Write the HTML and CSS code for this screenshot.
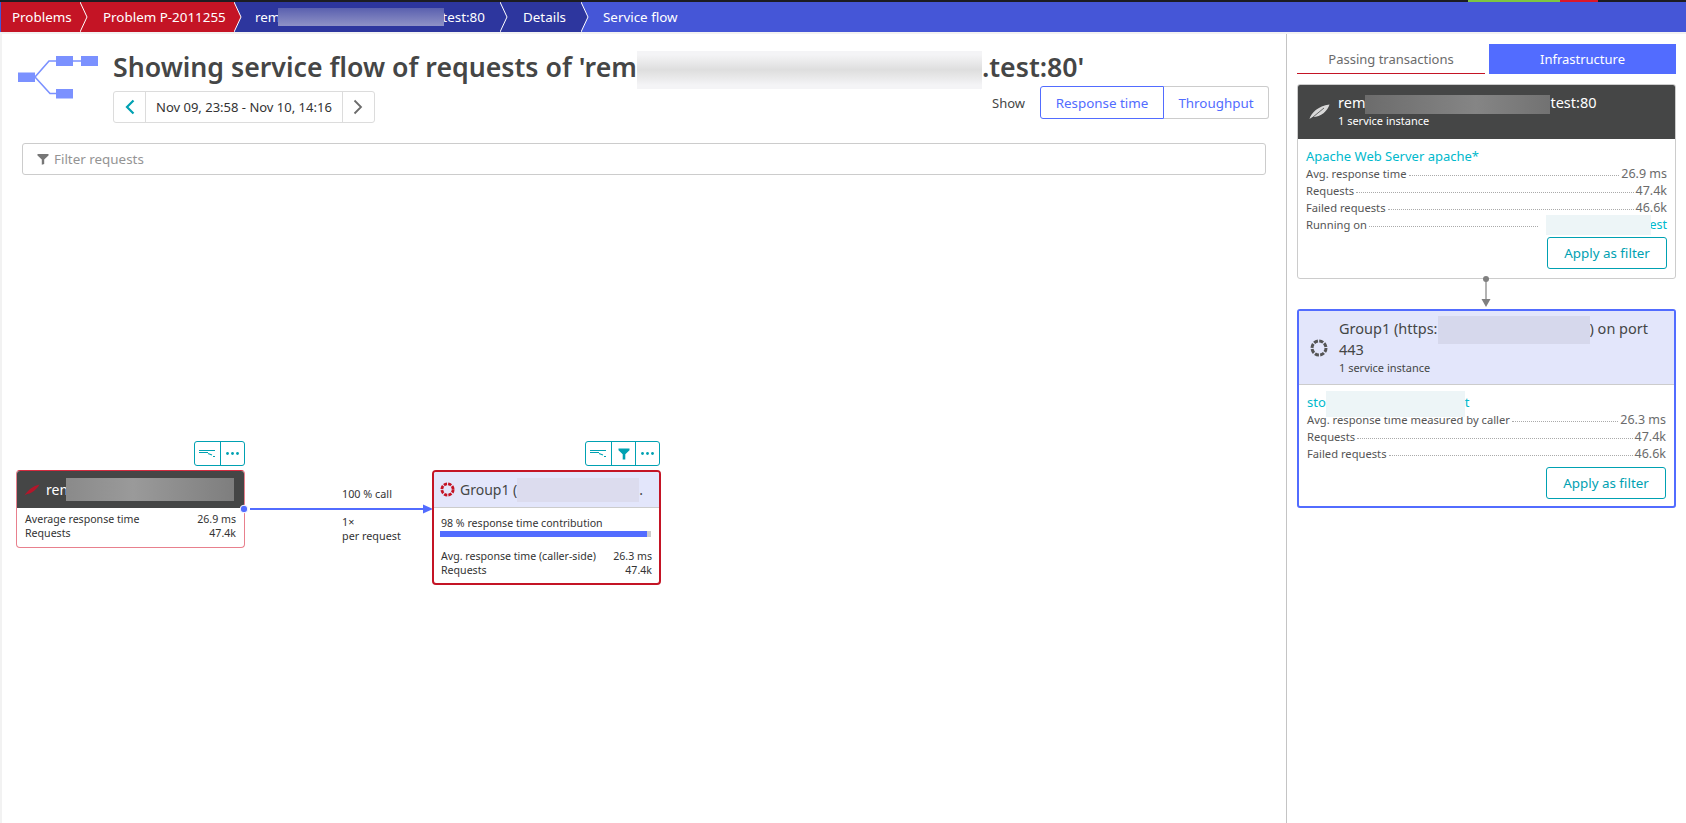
FILE: index.html
```html
<!DOCTYPE html>
<html lang="en">
<head>
<meta charset="utf-8">
<title>Service flow</title>
<link rel="stylesheet" href="styles.css">
</head>
<body>
<div class="app">
  <div class="statusbar"><span class="status-green"></span><span class="status-red"></span></div>
  <nav class="crumbs">
    <a class="crumb crumb-red c1">Problems<svg class="chev" viewBox="0 0 8 30"><path d="M0 0L7 15L0 30Z" fill="#c41425"/><path d="M0 0L7 15L0 30" fill="none" stroke="#fff"/></svg></a>
    <a class="crumb crumb-red c2">Problem P-2011255<svg class="chev" viewBox="0 0 8 30"><path d="M0 0L7 15L0 30Z" fill="#c41425"/><path d="M0 0L7 15L0 30" fill="none" stroke="#fff"/></svg></a>
    <a class="crumb crumb-navy c3">rem<span class="redact r-crumb"></span>test:80<svg class="chev" viewBox="0 0 8 30"><path d="M0 0L7 15L0 30Z" fill="#2d369e"/><path d="M0 0L7 15L0 30" fill="none" stroke="#fff"/></svg></a>
    <a class="crumb crumb-navy c4">Details<svg class="chev" viewBox="0 0 8 30"><path d="M0 0L7 15L0 30Z" fill="#2d369e"/><path d="M0 0L7 15L0 30" fill="none" stroke="#fff"/></svg></a>
    <a class="crumb crumb-blue">Service flow</a>
  </nav>
  <div class="main">
    <section class="left">
      <header class="head">
        <svg class="flow-icon" width="84" height="44" viewBox="0 0 84 44">
          <path d="M17 22L31 6H65M17 22L32 38.5H40" fill="none" stroke="#7b91ff" stroke-width="1.6"/>
          <rect x="0" y="17.5" width="17" height="9.5" fill="#7b91ff"/>
          <rect x="38" y="1" width="17" height="10" fill="#7b91ff"/>
          <rect x="63" y="1" width="17" height="10" fill="#7b91ff"/>
          <rect x="38" y="34" width="17" height="9.5" fill="#7b91ff"/>
        </svg>
        <div class="head-main">
          <h1 class="title">Showing service flow of requests of 'rem<span class="redact r-title"></span>.test:80'</h1>
          <div class="controls">
            <div class="datenav">
              <span class="nav-btn"><svg width="10" height="16" viewBox="0 0 10 16"><path d="M8.5 1.5L2 8L8.5 14.5" fill="none" stroke="#00a1b2" stroke-width="2.2"/></svg></span>
              <span class="date">Nov 09, 23:58 - Nov 10, 14:16</span>
              <span class="nav-btn nav-next"><svg width="10" height="16" viewBox="0 0 10 16"><path d="M1.5 1.5L8 8L1.5 14.5" fill="none" stroke="#6b6b6b" stroke-width="1.8"/></svg></span>
            </div>
            <div class="show">
              <span class="show-label">Show</span>
              <span class="seg seg-on">Response time</span>
              <span class="seg seg-off">Throughput</span>
            </div>
          </div>
        </div>
      </header>
      <div class="filter">
        <svg width="12" height="12" viewBox="0 0 12 12"><path d="M0.5 1H11.5V2.4L7.2 6.5V11L4.8 11.8V6.5L0.5 2.4Z" fill="#777"/></svg>
        <span>Filter requests</span>
      </div>
      <div class="canvas">
        <div class="toolbar tb1">
          <span class="tool tool-flow"><svg width="17" height="10" viewBox="0 0 17 10"><path d="M0 1.5H16M0 3.5H9M9 4.5L13 6M14 7.5H16" fill="none" stroke="#00a1b2" stroke-width="1.2"/></svg></span>
          <span class="tool tool-more"><svg width="13" height="3" viewBox="0 0 13 3"><circle cx="1.5" cy="1.5" r="1.4" fill="#00a1b2"/><circle cx="6.5" cy="1.5" r="1.4" fill="#00a1b2"/><circle cx="11.5" cy="1.5" r="1.4" fill="#00a1b2"/></svg></span>
        </div>
        <div class="node node1">
          <div class="node-head dark">
            <svg class="n-leaf" width="16" height="12" viewBox="0 0 16 12"><path d="M0.5 11.5C4 6 9 2 15.5 0.5C13 5 8 9.5 3 10Z" fill="#b4162a"/></svg>
            <span>ren</span><span class="redact r-node1"></span>
          </div>
          <div class="node-body">
            <div class="kv"><span>Average response time</span><span>26.9 ms</span></div>
            <div class="kv"><span>Requests</span><span>47.4k</span></div>
          </div>
        </div>
        <svg class="edge" width="200" height="14" viewBox="0 0 200 14">
          <circle cx="5" cy="7" r="3.8" fill="#526cff" stroke="#fff" stroke-width="1"/>
          <path d="M11 7H188" stroke="#526cff" stroke-width="1.8"/>
          <path d="M184 2.5L194 7L184 11.5Z" fill="#526cff"/>
        </svg>
        <div class="edge-label l1">100 % call</div>
        <div class="edge-label l2">1×<br>per request</div>
        <div class="toolbar tb2">
          <span class="tool tool-flow"><svg width="17" height="10" viewBox="0 0 17 10"><path d="M0 1.5H16M0 3.5H9M9 4.5L13 6M14 7.5H16" fill="none" stroke="#00a1b2" stroke-width="1.2"/></svg></span>
          <span class="tool tool-filter"><svg width="12" height="12" viewBox="0 0 12 12"><path d="M0.5 0.5H11.5V2.2L7.3 6.3V11.5H4.7V6.3L0.5 2.2Z" fill="#00a1b2"/></svg></span>
          <span class="tool tool-more"><svg width="13" height="3" viewBox="0 0 13 3"><circle cx="1.5" cy="1.5" r="1.4" fill="#00a1b2"/><circle cx="6.5" cy="1.5" r="1.4" fill="#00a1b2"/><circle cx="11.5" cy="1.5" r="1.4" fill="#00a1b2"/></svg></span>
        </div>
        <div class="node node2">
          <div class="node-head light">
            <svg class="n-ring" width="15" height="15" viewBox="0 0 16 16"><circle cx="8" cy="8" r="6" fill="none" stroke="#c41425" stroke-width="3" stroke-dasharray="3.5 1.21"/></svg>
            <span>Group1 (</span><span class="redact r-node2"></span><span>.</span>
          </div>
          <div class="node-body">
            <div class="contrib">98 % response time contribution</div>
            <div class="bar"><div class="bar-fill"></div></div>
            <div class="kv"><span>Avg. response time (caller-side)</span><span>26.3 ms</span></div>
            <div class="kv"><span>Requests</span><span>47.4k</span></div>
          </div>
        </div>
      </div>
    </section>
    <aside class="right">
      <div class="tabs">
        <span class="tab tab-off">Passing transactions</span>
        <span class="tab tab-on">Infrastructure</span>
      </div>
      <article class="card card-a">
        <div class="card-head dark">
          <svg class="leaf" width="21" height="16" viewBox="0 0 21 16"><path d="M0.5 15C2 9 9 2 20.5 0.5C18.5 7 12 13 4 13Z" fill="#d8d8d8"/><path d="M1 15.5L15 4" stroke="#454646" stroke-width="0.8"/></svg>
          <div>
            <div class="card-title">rem<span class="redact r-card"></span>test:80</div>
            <div class="card-sub">1 service instance</div>
          </div>
        </div>
        <div class="card-body">
          <div class="link-title">Apache Web Server apache*</div>
          <div class="row"><span>Avg. response time</span><i></i><span class="val">26.9 ms</span></div>
          <div class="row"><span>Requests</span><i></i><span class="val">47.4k</span></div>
          <div class="row"><span>Failed requests</span><i></i><span class="val">46.6k</span></div>
          <div class="row row-run"><span>Running on</span><i></i><span class="redact r-run"></span><span class="val-link">test</span></div>
          <div class="actions"><span class="apply">Apply as filter</span></div>
        </div>
      </article>
      <svg class="connector" width="12" height="32" viewBox="0 0 12 32">
        <circle cx="6" cy="3" r="3" fill="#808080"/>
        <path d="M6 3V24" stroke="#808080" stroke-width="1.2"/>
        <path d="M1.5 23H10.5L6 31Z" fill="#808080"/>
      </svg>
      <article class="card card-b">
        <div class="card-head light">
          <svg class="ring" width="18" height="18" viewBox="0 0 18 18"><circle cx="9" cy="9" r="7" fill="none" stroke="#555" stroke-width="3" stroke-dasharray="4.2 1.3"/></svg>
          <div class="card-text">
            <div class="card-title">Group1 (https:<span class="redact r-card2"></span>) on port 443</div>
            <div class="card-sub">1 service instance</div>
          </div>
        </div>
        <div class="card-body">
          <div class="link-title">sto<span class="redact r-link"></span>t</div>
          <div class="row"><span>Avg. response time measured by caller</span><i></i><span class="val">26.3 ms</span></div>
          <div class="row"><span>Requests</span><i></i><span class="val">47.4k</span></div>
          <div class="row"><span>Failed requests</span><i></i><span class="val">46.6k</span></div>
          <div class="actions"><span class="apply">Apply as filter</span></div>
        </div>
      </article>
    </aside>
  </div>
</div>
</body>
</html>
```
FILE: styles.css
```css
* { box-sizing: border-box; }
html, body { margin: 0; height: 100%; background: #fff; overflow: hidden; }
body { font-family: "Noto Sans", "Open Sans", sans-serif; color: #454646; }
.app { display: flex; flex-direction: column; height: 823px; }

.statusbar { height: 2px; background: #1c1c22; display: flex; padding-left: 1468px; flex: none; }
.status-green { width: 92px; background: #7dc540; }
.status-red { width: 38px; background: #dc172a; }

.crumbs { display: flex; height: 30px; flex: none; background: #4556d7; padding-left: 1px; }
.crumb { position: relative; display: flex; align-items: center; height: 30px; color: #fff; font-size: 13.4px; white-space: nowrap; flex: none; }
.crumb-red { background: #c41425; }
.crumb-navy { background: #2d369e; }
.crumb-blue { background: #4556d7; padding-left: 22px; flex: 1; }
.c1 { width: 79px; padding-left: 11px; }
.c2 { width: 154px; padding-left: 23px; }
.c3 { width: 266px; padding-left: 21px; }
.c4 { width: 81px; padding-left: 23px; }
.chev { position: absolute; left: 100%; top: 0; width: 8px; height: 30px; z-index: 2; }

.redact { display: inline-block; flex: none; vertical-align: middle; filter: blur(0.6px); position: relative; }
.r-crumb { width: 166px; height: 18px; margin: -4px -2px -4px -2px; background: linear-gradient(#5a60af, #8f92c6); }
.r-title { width: 345px; height: 38px; margin: -8px 0; background: linear-gradient(#f4f4f6 10%, #dedede 50%, #f4f4f6 90%); }
.r-card { width: 185px; height: 19px; margin: -4px 0; background: linear-gradient(90deg, #6c6c6c, #858585 60%, #727272); }
.r-node1 { width: 168px; height: 23px; background: linear-gradient(90deg, #8a8a8a, #9a9a9a 40%, #7e7e7e); }
.r-node2 { width: 122px; height: 24px; background: #dcdcee; }
.r-card2 { width: 152px; height: 28px; margin: -8px 0; background: #d6d8ec; }
.r-run { width: 105px; height: 20px; margin: -6px -6px -6px 6px; background: #edf5f7; align-self: center; }
.r-link { width: 139px; height: 26px; margin: -8px 0; background: #edf5f7; }

.main { flex: 1; display: flex; min-height: 0; border-top: 2px solid #f2f2f2; border-left: 2px solid #f2f2f2; }
.left { flex: 1; display: flex; flex-direction: column; min-width: 0; }
.right { width: 400px; flex: none; border-left: 1px solid #c4c4c4; padding: 10px 9px 0 10px; }

.head { display: flex; padding: 0 17px 0 16px; }
.flow-icon { flex: none; margin-top: 21px; }
.head-main { flex: 1; margin-left: 11px; min-width: 0; }
.title { margin: 14px 0 0; font-size: 26.7px; font-weight: 600; line-height: 38px; white-space: nowrap; color: #454646; }
.controls { display: flex; justify-content: space-between; align-items: flex-start; }
.datenav { display: flex; height: 32px; margin-top: 5px; border: 1px solid #dcdcdc; border-radius: 3px; align-items: center; }
.nav-btn { width: 31px; height: 100%; display: flex; align-items: center; justify-content: center; }
.nav-next { width: 32px; border-left: 1px solid #dcdcdc; }
.date { height: 100%; display: flex; align-items: center; padding: 0 10px; border-left: 1px solid #dcdcdc; font-size: 13px; color: #333; }
.show { display: flex; align-items: center; height: 33px; }
.show-label { font-size: 13px; margin-right: 15px; }
.seg { height: 33px; display: flex; align-items: center; justify-content: center; font-size: 13.4px; color: #526cff; }
.seg-on { width: 124px; border: 1px solid #526cff; border-radius: 3px 0 0 3px; }
.seg-off { width: 105px; border: 1px solid #ccc; border-left: 0; border-radius: 0 3px 3px 0; }

.filter { display: flex; align-items: center; gap: 5px; height: 32px; margin: 20px 20px 0 20px; padding-left: 14px; padding-bottom: 1px; border: 1px solid #ccc; border-radius: 3px; font-size: 13.4px; color: #949494; }

.canvas { position: relative; flex: 1; }
.canvas .toolbar, .canvas .node, .canvas .edge, .canvas .edge-label { position: absolute; }
.toolbar { display: flex; height: 25px; border: 1px solid #00a1b2; border-radius: 3px; background: #fff; }
.tool { display: flex; align-items: center; justify-content: center; border-left: 1px solid #00a1b2; }
.tool-flow { width: 25px; border-left: 0; }
.tool-filter { width: 24px; }
.tool-more { width: 24px; }
.tb1 { left: 192px; top: 266px; }
.tb2 { left: 583px; top: 266px; }

.node { background: #fff; font-size: 10.6px; color: #333; }
.node-head { display: flex; align-items: center; height: 38px; font-size: 14px; }
.node-head.dark { background: #454646; color: #fff; padding-left: 7px; }
.node-head.light { background: #e3e6fb; color: #454646; border-bottom: 1px solid #ccc; padding-left: 6px; }
.node1 { left: 14px; top: 295px; width: 229px; height: 78px; border: 1px solid #e8808d; border-top-color: #d52b3f; border-radius: 4px; overflow: hidden; }
.node1 .node-head { height: 37px; }
.n-leaf { margin-right: 6px; }
.r-node1 { margin-left: -2px; }
.node2 { left: 430px; top: 295px; width: 229px; height: 115px; border: 2px solid #c41425; border-radius: 4px; overflow: hidden; }
.node2 .node-head { height: 36px; }
.n-ring { margin-right: 5px; }
.node-body { padding: 4px 8px; }
.node2 .node-body { padding: 8px 7px; }
.kv { display: flex; justify-content: space-between; line-height: 14px; }
.contrib { line-height: 14px; }
.bar { height: 6px; margin: 1px 1px 12px -1px; background: #ccc; }
.bar-fill { width: 98%; height: 100%; background: #526cff; }

.edge { left: 237px; top: 327px; }
.edge-label { left: 340px; font-size: 10.8px; line-height: 14px; color: #333; }
.l1 { top: 312px; }
.l2 { top: 340px; }

.tabs { display: flex; gap: 4px; }
.tab { width: 187px; height: 30px; display: flex; align-items: center; justify-content: center; font-size: 13px; }
.tab-off { width: 188px; color: #6b6b6b; border-bottom: 1px solid #c41425; }
.tab-on { background: #526cff; color: #fff; }

.card { width: 379px; border-radius: 3px; overflow: hidden; background: #fff; }
.card-a { margin-top: 10px; height: 195px; border: 1px solid #ccc; }
.card-b { height: 199px; border: 2px solid #526cff; }
.connector { display: block; margin: -3px 0 1px 183px; position: relative; z-index: 1; }
.card-head { display: flex; align-items: center; font-size: 14.5px; }
.card-head.dark { background: #454646; color: #fff; height: 54px; padding-left: 11px; }
.card-head.light { background: #e3e6fb; color: #454646; height: 74px; padding-left: 11px; border-bottom: 1px solid #ccc; }
.leaf { margin-right: 8px; flex: none; }
.ring { margin-right: 11px; flex: none; }
.card-title { line-height: 20px; width: 325px; }
.card-a .card-title { margin-top: -3px; }
.card-text { margin-top: -2px; }
.card-text .card-title { line-height: 21px; }
.card-sub { font-size: 11px; line-height: 16px; }
.card-a .card-sub { margin-top: 1px; }
.card-body { padding: 8px 8px 0 8px; }
.link-title { font-size: 13px; line-height: 18px; color: #00b9cc; }
.row { display: flex; align-items: baseline; font-size: 11.2px; line-height: 17px; color: #555; }
.row i { flex: 1; margin: 0 2px; border-bottom: 1px dotted #aaa; transform: translateY(-2px); }
.val { color: #6b6b6b; font-size: 12.5px; }
.val-link { color: #00b9cc; font-size: 12.5px; }
.actions { display: flex; justify-content: flex-end; margin-top: 4px; }
.card-b .actions { margin-top: 5px; }
.apply { width: 120px; height: 32px; display: flex; align-items: center; justify-content: center; border: 1px solid #00a1b2; border-radius: 3px; color: #00a1b2; font-size: 13.4px; }
```
